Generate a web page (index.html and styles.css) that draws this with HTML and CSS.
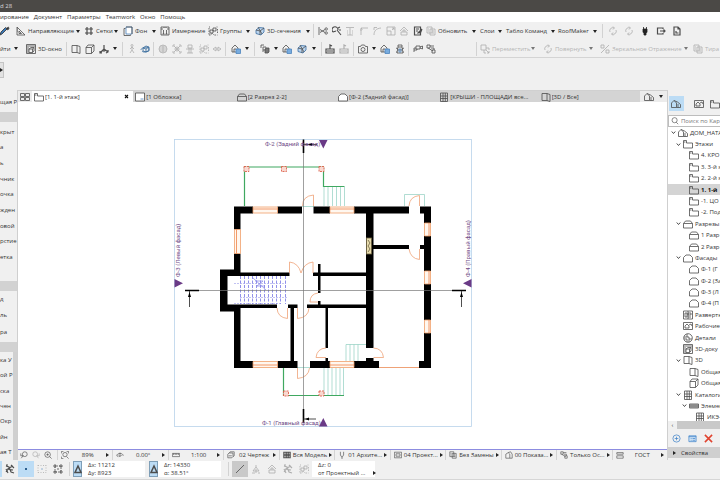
FILE: index.html
```html
<!DOCTYPE html>
<html lang="ru">
<head>
<meta charset="utf-8">
<title>Archicad 28</title>
<link rel="stylesheet" href="styles.css">
</head>
<body>
<svg class="sprite" aria-hidden="true">
  <symbol id="pen" viewBox="0 0 10 10"><path d="M0 9l2-1 5-5-1.500-1.500L1 6z" fill="#3a79b8" stroke="#333"/><path d="M6 2.500L8.500 1 9 3 7 4" fill="#333"/></symbol>
  <symbol id="setsq" viewBox="0 0 10 10"><path d="M1 1v8h8z"/><path d="M3 5v2.500h2.500zM1 3h1M1 5h1"/></symbol>
  <symbol id="hash" viewBox="0 0 10 10"><path d="M3 1v8M7 1v8M1 3h8M1 7h8" stroke-width="1.200"/></symbol>
  <symbol id="bg" viewBox="0 0 10 10"><path d="M3 1h6v7H3z" stroke="#4c84bd" fill="#fff"/><path d="M2.500 2.500H1V9.500h6.500V8.500M3 1h6v7"/></symbol>
  <symbol id="measure" viewBox="0 0 10 10"><path d="M1 1h8M1 1v8h8V1M1 3h2M7 3h2M3.500 4v4M6.500 4v4M4 1v1M6 1v1M2.500 8h2M5.500 8h2"/></symbol>
  <symbol id="group" viewBox="0 0 10 10"><path d="M2 4h3v3H2zM5 2h3v3H5z"/><path d="M1 1h1M8.500 1h1M1 9h2l1-2 2 2h3.500M1 2v7M9.500 3v5" stroke-dasharray="1.500 1"/></symbol>
  <symbol id="sect" viewBox="0 0 10 10"><path d="M1 4l3-2.500L9 2v4L6 9 1 7.500z" fill="#bcd5ee" stroke="#3a6ea5"/><path d="M1 4l4 1v4M5 5l4-3M3 1l4 7"/></symbol>
  <symbol id="split" viewBox="0 0 10 10"><path d="M1 1v8M2 3.500l5 3M2 6.500l5-3"/><circle cx="8.200" cy="3" r="1.200"/><circle cx="8.200" cy="7" r="1.200"/></symbol>
  <symbol id="wand" viewBox="0 0 10 10"><path d="M1 6a3 3 0 1 1 5-2M5 4l4 5M1 6l3-1M6 2l2-1M7 4h2" stroke-width="1.100"/></symbol>
  <symbol id="beam" viewBox="0 0 10 10"><path d="M1 1.500h8M5 2v7M2 9h6M2 5h1M7 5h1M2 7h1M7 7h1"/></symbol>
  <symbol id="corner" viewBox="0 0 10 10"><path d="M2 9V2h7M2 2l1.500 1.500M1 4h2"/></symbol>
  <symbol id="fillet" viewBox="0 0 10 10"><path d="M2 9C2 5 4 2.500 9 2M2 4V1.500h3"/></symbol>
  <symbol id="resize" viewBox="0 0 10 10"><path d="M1 1h8v8H1zM1 5h4v4M6 4l2-2M6 2h2v2"/></symbol>
  <symbol id="roof" viewBox="0 0 10 10"><path d="M1 5l4-4 4 4M2 9V6h6v3zM4 6V4h2v2"/></symbol>
  <symbol id="edit" viewBox="0 0 10 10"><path d="M1.500 1h6v8h-6zM3 3h3M3 5h2M4.500 7.500L9 3M7 8l2-5" stroke-width="1.200"/></symbol>
  <symbol id="copy" viewBox="0 0 10 10"><path d="M1 1h5v6H1zM4 3h5v6H4zM2 3h1M2 5h1M6 5h2M6 7h2"/></symbol>
  <symbol id="refresh" viewBox="0 0 10 10"><path d="M2 6a3 3 0 0 1 4-4M8 4a3 3 0 0 1-4 4M5 .5L6.500 2 5 3.500M5 6.500L3.500 8 5 9.500"/></symbol>
  <symbol id="plug" viewBox="0 0 10 10"><path d="M3 3h4v3L6 7.500V9H4V7.500L3 6zM3.500 1v2M6.500 1v2" fill="#222" stroke="#222"/></symbol>
  <symbol id="export" viewBox="0 0 10 10"><path d="M7 3V2H1.500v6H7V7M4 5h5M7.500 3.500L9 5 7.500 6.500" stroke-width="1.200"/></symbol>
  <symbol id="doc" viewBox="0 0 10 10"><path d="M2 1h4l2 2v6H2zM6 1v2h2M4 5v2h2.500" stroke-width="1.200"/></symbol>
  <symbol id="win3d" viewBox="0 0 10 10"><path d="M.5 .5h9v9h-9z"/><path d="M.5 2h9M3 5l2-1.500h3V7L6.500 8.500H3zM3 5h3.500v3.500M6.500 5L8 3.500M2 3v6"/></symbol>
  <symbol id="box" viewBox="0 0 10 10"><path d="M1 1.500h5v7H1zM6 1.500l3 1v7l-3-1"/></symbol>
  <symbol id="cube" viewBox="0 0 10 10"><path d="M1 3.500h5.500v6H1zM1 3.500L3 1h6L6.500 3.500M9 1v6L6.500 9.500"/></symbol>
  <symbol id="axes" viewBox="0 0 10 10"><path d="M5 5V1M5 5L1 9M5 5l4 3M3.500 6.500L5 7l1.500-.8M1 7v2h2M7 9l2-1V6" stroke-width="1.200"/></symbol>
  <symbol id="walk" viewBox="0 0 10 10"><circle cx="5" cy="1.500" r="1"/><path d="M5 3v3L3 9M5 6l2 3M3 5l2-2 2 2"/></symbol>
  <symbol id="orbit" viewBox="0 0 10 10"><path d="M1 6c0-3 8-4 8-1S3 9 2 7M3 4l3-2 3 1v4L6 8 3 7zM6 5v3M3 4l3 1 3-2" stroke="#34689b"/></symbol>
  <symbol id="globe" viewBox="0 0 10 10"><circle cx="5" cy="5" r="4"/><path d="M1 5h8M5 1v8M2 3h6M2 7h6"/></symbol>
  <symbol id="frame" viewBox="0 0 10 10"><path d="M1 3V1h2M7 1h2v2M9 7v2H7M3 9H1V7M2 2l6 6M8 2L2 8"/><circle cx="5" cy="5" r="2"/></symbol>
  <symbol id="person" viewBox="0 0 10 10"><path d="M3 1h4v3H3zM1 5h8M4 4v5M6 4v5M2 9h6"/></symbol>
  <symbol id="flip" viewBox="0 0 10 10"><path d="M1 5l3-2v4zM9 5L6 3v4zM4 5h2"/></symbol>
  <symbol id="house" viewBox="0 0 10 10"><path d="M1 9V4l3-2 2 2v5zM4 2l3-1 2 3v5H6"/></symbol>
  <symbol id="houseblue" viewBox="0 0 10 10"><path d="M1 8V4l3-3 3 3v4z"/><path d="M5 5h4.500v4.500H5z" fill="#78acdf" stroke="#4c84bd"/><path d="M3 8V5h2"/></symbol>
  <symbol id="darkbox" viewBox="0 0 10 10"><path d="M1 4V1h3M3 3h3v3H3z"/><path d="M5 5l2-1h2v4L8 9H5zM4 7H2" fill="#777"/></symbol>
  <symbol id="base" viewBox="0 0 10 10"><path d="M1 5h8v4H1zM5 5V1l2 1M2 7h6" stroke-width="1.200"/></symbol>
  <symbol id="camera" viewBox="0 0 10 10"><path d="M.5 2.500h2L3.500 1h3l1 1.500h2V9h-9z"/><circle cx="5" cy="5.500" r="2"/></symbol>
  <symbol id="bug" viewBox="0 0 10 10"><path d="M3 3h4l1 6H2zM3 3V1h4v2M1 4l2 1M9 4L7 5M1 8h1M8 8h1M3 6h4"/><path d="M4 5h2v3H4z" stroke="#4c84bd"/></symbol>
  <symbol id="cam2" viewBox="0 0 10 10"><path d="M3 2h4v3H3zM7 3l2.500-1v3L7 4M3 4H1v4M1 6h3V5"/></symbol>
  <symbol id="link" viewBox="0 0 10 10"><path d="M1 1h3v3H1zM6 6h3v3H6zM4 2h4M2 4l5 3M5 4h3v2"/></symbol>
  <symbol id="move" viewBox="0 0 10 10"><path d="M1 1h5v5H1zM4 6v3h2M6 4h3v2M6 6l3 3M9 7v2H7"/></symbol>
  <symbol id="mirror" viewBox="0 0 10 10"><path d="M1 9L9 1M1 1h3v3H1zM6 6h3v3H6z"/></symbol>
  <symbol id="quad" viewBox="0 0 10 10"><path d="M.5 1.500h4v3h-4zM5.500 1.500h4v3h-4zM.5 5.500h4v3h-4zM5.500 5.500h4v3h-4z"/></symbol>
  <symbol id="plan" viewBox="0 0 10 10"><path d="M.5 9V1.500h3v2.500h6V9zM.5 3h2"/></symbol>
  <symbol id="sheet" viewBox="0 0 10 10"><path d="M.5 1h9v8h-9z" fill="#fff"/><path d="M5.500 7h3" stroke="#4c84bd"/></symbol>
  <symbol id="section" viewBox="0 0 10 10"><path d="M.5 4.500L2.500 2h5l2 2.500V9h-9zM.5 4.500h9"/></symbol>
  <symbol id="facade" viewBox="0 0 10 10"><path d="M.5 9V4.500L3 2h4l2.500 2.500V9z" fill="#fff"/></symbol>
  <symbol id="table" viewBox="0 0 10 10"><path d="M1.500 1h7v8.500h-7zM1.500 4h7M1.500 6.500h7M4 1v8.500M6.300 1v8.500"/></symbol>
  <symbol id="homes" viewBox="0 0 10 10"><path d="M.5 8.500V4L3 1.500 5.500 4v4.500zM3 1.500L6.500 3 9.500 5.500v3h-4M7 5v3.500"/></symbol>
  <symbol id="layout" viewBox="0 0 10 10"><path d="M.5 1h9v8h-9zM2 3h2v4H2zM5 3h3v2H5zM5 7h3M5 1v8"/></symbol>
  <symbol id="work" viewBox="0 0 10 10"><path d="M.5 1.500h9v7h-9zM2 7V5l2-2 2 2v2zM6 4l2-1 1 2"/></symbol>
  <symbol id="detail" viewBox="0 0 10 10"><circle cx="5" cy="5" r="4.300"/><path d="M1 4h5v2h3M1 6h3v3M4 1v3M6 6v3"/></symbol>
  <symbol id="elem" viewBox="0 0 10 10"><path d="M.5 3h9v4h-9zM2 3v4M4 3v4M6 3v4M8 3v4M.5 5h9"/></symbol>
  <symbol id="search" viewBox="0 0 10 10"><circle cx="4.500" cy="4" r="3.200"/><path d="M6.500 6.500L9 9"/></symbol>
  <symbol id="undo" viewBox="0 0 10 10"><circle cx="6" cy="4" r="3"/><path d="M4 6L1.500 9M1 3v3h3"/></symbol>
  <symbol id="redo" viewBox="0 0 10 10"><circle cx="4" cy="4" r="3"/><path d="M6 6l2 3M9 3v3H6"/></symbol>
  <symbol id="zoomin" viewBox="0 0 10 10"><circle cx="4.500" cy="4.500" r="3.500"/><path d="M7 7l2.500 2.500M3 4.500h3M4.500 3v3"/></symbol>
  <symbol id="fit" viewBox="0 0 10 10"><path d="M.5 3V.5H3M7 .5h2.500V3M.5 7v2.500H3"/><circle cx="5" cy="4.500" r="2.700"/><path d="M7 7l2.500 2.500"/></symbol>
  <symbol id="rot" viewBox="0 0 10 10"><path d="M1 6c0-4 8-4 8 0M3 5l2 2 2-2M5 7V2M1 6l2 1"/></symbol>
  <symbol id="ruler" viewBox="0 0 10 10"><path d="M.5 3h9v4h-9zM2 3v2M4 3v2M6 3v2M8 3v2"/></symbol>
  <symbol id="layers" viewBox="0 0 10 10"><path d="M1 4l1.500-1.500h5V7L6 8.500H1zM3 2.500L4 1h5v5L7.500 7M2 6h4"/></symbol>
  <symbol id="model" viewBox="0 0 10 10"><path d="M1 1.500h8v7H1zM1 4h8M1 6h8M4 1.500v7M6.500 1.500v7" stroke-width="1.300"/></symbol>
  <symbol id="penset" viewBox="0 0 10 10"><path d="M3 1v4l2 3 2-3V1M5 8v2"/></symbol>
  <symbol id="screen" viewBox="0 0 10 10"><path d="M.5 1.500h9v7h-9zM2.500 3.500h5v3h-5z"/></symbol>
  <symbol id="fillrule" viewBox="0 0 10 10"><path d="M1 2h8M1 2v2h8V2M1 6h8v3H1z"/></symbol>
  <symbol id="tri" viewBox="0 0 10 10"><path d="M2 7h6L5 3z"/><path d="M5 3V1M1 9h3M7 9h2M5 5v4" /></symbol>
  <symbol id="snap" viewBox="0 0 10 10"><path d="M1 2l3 1 2 5 3 1M1 8l3-4 4-2M2 5l6 1M6 1l3 3M1 1h2M1 5l2 4" stroke-width="1.100"/></symbol>
  <symbol id="dots" viewBox="0 0 10 10"><path d="M1 1.500h8M1 8.500h8M1 1v8M9 1v8" stroke-dasharray="1 1.500"/><path d="M4 5h2M5 4v2" stroke="#3a79b8"/></symbol>
  <symbol id="dots2" viewBox="0 0 10 10"><path d="M2 2h6v6H2z" stroke-dasharray="1 1"/><path d="M1 1h2v2H1zM7 1h2v2H7zM1 7h2v2H1zM7 7h2v2H7zM4 5h2"/></symbol>
  <symbol id="slope" viewBox="0 0 10 10"><path d="M1 9L9 1"/></symbol>
  <symbol id="delta" viewBox="0 0 10 10"><path d="M2 8.500h6L5 2z" stroke-width="1.500"/></symbol>
  <symbol id="plus" viewBox="0 0 10 10"><circle cx="5" cy="5" r="4" stroke="#3d82c8"/><path d="M3 5h4M5 3v4" stroke="#3d82c8"/></symbol>
  <symbol id="props" viewBox="0 0 10 10"><path d="M1 2h8v6.500H1z" stroke="#3d82c8" fill="#d5e7f7"/><path d="M1 3h8M3 5h1M5 5h3M3 7h1M5 7h3" stroke="#3d82c8"/></symbol>
  <symbol id="del" viewBox="0 0 10 10"><path d="M1 1l8 8M9 1L1 9" stroke="#e0432f" stroke-width="1.700"/></symbol>
  <symbol id="down" viewBox="0 0 10 10"><path d="M1.500 3L5 7l3.500-4" stroke-width="2"/></symbol>
  <symbol id="x" viewBox="0 0 10 10"><path d="M2 2l6 6M8 2L2 8" stroke-width="2.200" stroke="#111"/></symbol>
</svg>

<header class="titlebar">d 28</header>
<nav class="menubar">
  <a href="#">ирование</a><a href="#">Документ</a><a href="#">Параметры</a><a href="#">Teamwork</a><a href="#">Окно</a><a href="#">Помощь</a>
</nav>

<div class="toolbar toolbar-a">
  <button aria-label="Перо"><svg><use href="#pen"/></svg></button>
  <button><svg><use href="#setsq"/></svg>Направляющие</button><i class="caret"></i>
  <button><svg><use href="#hash"/></svg>Сетки</button><i class="caret"></i>
  <button><svg><use href="#bg"/></svg>Фон</button><i class="caret"></i>
  <button><svg><use href="#measure"/></svg>Измерение</button>
  <button><svg><use href="#group"/></svg>Группы</button><i class="caret"></i>
  <button><svg><use href="#sect"/></svg>3D-сечения</button><i class="caret"></i>
  <i class="sep"></i>
  <button aria-label="Разрезать"><svg><use href="#split"/></svg></button>
  <button aria-label="Подобрать"><svg><use href="#wand"/></svg></button>
  <button disabled aria-label="Подрезать"><svg><use href="#beam"/></svg></button>
  <button disabled aria-label="Угол"><svg><use href="#corner"/></svg></button>
  <button disabled aria-label="Скругление"><svg><use href="#fillet"/></svg></button>
  <button disabled aria-label="Размер"><svg><use href="#resize"/></svg></button>
  <button disabled aria-label="Крыша"><svg><use href="#roof"/></svg></button>
  <button aria-label="Правка"><svg><use href="#edit"/></svg></button>
  <button><svg class="faint"><use href="#copy"/></svg>Обновить</button><i class="caret"></i>
  <button>Слои</button><i class="caret"></i>
  <button>Табло Команд</button><i class="caret"></i>
  <button>RoofMaker</button><i class="caret"></i>
  <i class="sep"></i>
  <button disabled aria-label="Синхронизация"><svg><use href="#refresh"/></svg></button>
  <button disabled aria-label="Обновить связь"><svg><use href="#refresh"/></svg></button>
  <button aria-label="Подключение"><svg><use href="#plug"/></svg></button>
  <button aria-label="Экспорт"><svg><use href="#export"/></svg></button>
  <button aria-label="Отчет"><svg><use href="#doc"/></svg></button>
</div>

<div class="toolbar toolbar-b">
  <button>йти</button><i class="caret"></i>
  <button><svg><use href="#win3d"/></svg>3D-окно</button>
  <i class="sep"></i>
  <button aria-label="Перспектива"><svg><use href="#box"/></svg></button>
  <button aria-label="Аксонометрия"><svg><use href="#cube"/></svg></button>
  <button aria-label="Оси"><svg><use href="#axes"/></svg></button><i class="caret"></i>
  <i class="sep"></i>
  <button disabled aria-label="Прогулка"><svg><use href="#walk"/></svg></button>
  <button aria-label="Орбита"><svg><use href="#orbit"/></svg></button>
  <i class="sep"></i>
  <button disabled aria-label="Вид"><svg><use href="#globe"/></svg></button>
  <button disabled aria-label="Рамка"><svg><use href="#frame"/></svg></button>
  <button disabled aria-label="Точка"><svg><use href="#person"/></svg></button>
  <button disabled aria-label="Группа"><svg><use href="#group"/></svg></button>
  <button disabled aria-label="Отразить"><svg><use href="#flip"/></svg></button>
  <i class="sep"></i>
  <button aria-label="Фильтр"><svg><use href="#houseblue"/></svg></button><i class="caret"></i>
  <i class="sep"></i>
  <button aria-label="Бегущая рамка"><svg><use href="#darkbox"/></svg></button><i class="caret"></i>
  <button aria-label="Дом"><svg><use href="#houseblue"/></svg></button>
  <button aria-label="Сечение"><svg><use href="#sect"/></svg></button><i class="caret"></i>
  <i class="sep"></i>
  <button aria-label="Основание"><svg><use href="#base"/></svg></button>
  <button disabled aria-label="Основания"><svg><use href="#base"/></svg></button>
  <i class="sep"></i>
  <button aria-label="Камера"><svg><use href="#camera"/></svg></button><i class="caret"></i>
  <button aria-label="Снимок"><svg><use href="#houseblue"/></svg></button>
  <button aria-label="Проверка"><svg><use href="#bug"/></svg></button>
  <i class="sep"></i>
  <button aria-label="Съемка"><svg><use href="#cam2"/></svg></button>
  <button aria-label="Связь"><svg><use href="#link"/></svg></button>
  <i class="sep"></i>
  <button disabled><svg><use href="#move"/></svg>Переместить</button><i class="caret soft"></i>
  <button disabled><svg><use href="#refresh"/></svg>Повернуть</button><i class="caret soft"></i>
  <button disabled><svg><use href="#mirror"/></svg>Зеркальное Отражение</button><i class="caret soft"></i>
  <button disabled><svg><use href="#copy"/></svg>Тира</button>
</div>

<div class="infobar"><button aria-label="Развернуть"><i class="play"></i></button></div>

<main class="work">
  <aside class="toolbox">
    <p>щая Р.</p>
    <hr>
    <ul class="design"><li>крыт</li><li>а</li><li>ь</li><li>чник</li><li>очка</li><li>жден</li><li>овой</li><li>рстие</li><li>етка</li></ul>
    <hr>
    <ul class="objects"><li>д</li><li>ль</li><li>ра</li></ul>
    <hr>
    <ul class="docs"><li>ка У</li><li>ой Р</li><li>ска</li><li>чен</li><li>Окр</li><li>йн</li><li>ая Т</li></ul>
  </aside>

  <section class="center">
    <div class="tabs">
      <button class="overview" aria-label="Обзор вкладок"><svg><use href="#quad"/></svg></button>
      <button class="tab active"><svg><use href="#plan"/></svg><span>[1. 1-й этаж]</span><svg class="close"><use href="#x"/></svg></button>
      <button class="tab"><svg><use href="#sheet"/></svg><span>[1 Обложка]</span></button>
      <button class="tab"><svg><use href="#section"/></svg><span>[2 Разрез 2-2]</span></button>
      <button class="tab"><svg><use href="#facade"/></svg><span>[Ф-2 (Задний фасад)]</span></button>
      <button class="tab"><svg><use href="#table"/></svg><span>[КРЫШИ - ПЛОЩАДИ все...</span></button>
      <button class="tab"><svg><use href="#box"/></svg><span>[3D / Все]</span></button>
      <button class="more" aria-label="Показать"><svg><use href="#homes"/></svg><i class="caret"></i></button>
    </div>

    <svg class="plan" viewBox="18 102 649 347" role="img" aria-label="План первого этажа">
      <rect x="174.500" y="139.500" width="297" height="287" fill="none" stroke="#b9d3ea"/>
      <g fill="none" stroke="#8fcfc0" stroke-width=".7">
        <path d="M324 187v19M328 187v19M332.500 187v19M336.500 187v19M340.500 187v19M344.500 187v19"/>
        <path d="M324 368v27M328 368v27M332 368v27M336 368v27M340 368v27M343.500 368v27"/>
        <path d="M366 344.500h-20V361M350 344.500V361M354 344.500V361M358 344.500V361"/>
        <path d="M404.500 206v-11.500h20V206M302 206.500h12M297 367.500h14"/>
      </g>
      <g fill="none" stroke="#3fa860" stroke-width="1.200">
        <path d="M244.500 206v-39h79v19.500h21"/>
        <path d="M283.500 368v27.500H344"/>
      </g>
      <g fill="#f9d8d0" stroke="#d9503a" stroke-dasharray="2 1">
        <path d="M244 166.500h5v5h-5zM281.500 166.500h5v5h-5zM319 166.500h5v5h-5zM283.500 391h5v5h-5zM319 391h5v5h-5z"/>
      </g>
      <g fill="none" stroke="#8585e6" stroke-width=".9">
        <path d="M240.500 276v28M244.500 276v28M248.500 276v28M252.500 276v28M256.500 276v28M260.500 276v28M264.500 276v28M268.500 276v28M272.500 276v28M276.500 276v28M280.500 276v28M285.500 276v28" stroke-dasharray="3 1.500"/>
        <path d="M234 283.500h52M240 297.500h47M234 303.500h46" stroke-width=".5" stroke-dasharray="2 1"/>
        <path d="M252 277l14 13M255 281h8l-6 5h8" stroke-width=".7"/>
      </g>
      <g fill="#000">
        <path d="M234 206.500h19v7h-12.500v16H234zM277.500 206.500H302v7h-24.500zM313.500 206.500H330v7h-16.500zM354 206.500h55v7h-35.500V245H409v4h-35.500v99H366v-40h-38v40h-2.500v-40H307v-3.500h11V301h2.500v3.500H366V276h-45.500v17H318v-17h-5v-3.500h5V264h2.500v8.500H366v-59h-12z"/>
        <path d="M420 206.500h11V223h-7v-9.500h-4zM420 245h4v-9h7v35h-7v-22h-4zM424 284h7v36h-7zM424 333h7v35h-12v-7h5z"/>
        <path d="M234 253.500h6.500v19h49v3.500h-62v28.500H277v3.500h-36.500v53H253v7h-19v-56.500h-14v-42h14z"/>
        <path d="M288 304.500h9.500v3.500H294v53h3.500v7h-20v-7h13v-53H288zM310 361h15.500v-3h2.500v3h2v7h-20zM354 361h12v-3h7.500v3h5.500v7h-25z" transform="translate(0 0)"/>
      </g>
      <g fill="#fff7ef" stroke="#f0a06a" stroke-width=".8">
        <path d="M253 207h24.500v6H253zM330 207h24v6h-24zM253 361.500h24.500v6H253zM330 361.500h24v6h-24zM234.500 229.500h6v24h-6zM424.500 223h6v13h-6zM424.500 271h6v13h-6zM424.500 320h6v13h-6z"/>
        <path d="M253 209h24.500M330 209h24M253 365h24.500M330 365h24M236.500 229.500v24M429 223v13M429 271v13M429 320v13" stroke="#ef8246"/>
      </g>
      <g fill="none" stroke="#efa277" stroke-width=".8">
        <path d="M313.500 206v-11q-11 1-11 11M289.500 273v-11q9 1 11.500 11 3-10 12-11v11M419.500 206v-10.500q-10 1-10.500 10.500M419.500 249v10.500q-9-1-10.500-10.500M287.500 308v10.500q-10-1-10.500-10.500M297.500 308v10.500q11-1 11.500-10.500M318 302h-8q0-8 8-9M326 357.500h-10q1-9 10-9.500M373.500 357.500h10q-1-9-10-9.500M297.500 368v10.500q11-1 12-10.500"/>
        <path d="M379 367.500h40" stroke-width="1"/>
      </g>
      <rect x="366.500" y="238" width="5" height="16" fill="#e8dcae" stroke="#6b6140"/>
      <path d="M368 240l2 3-2 3 2 3-2 3" fill="none" stroke="#6b6140"/>
      <path d="M303.500 140v280M190 290.500h270" stroke="#777" stroke-width=".7"/>
      <path d="M303.500 139.500v13.500M303.500 409v14M185 290.500h14M452 290.500h14" stroke="#000" stroke-width="1.600"/>
      <path d="M303 144.500h14M303 419h13M189.500 291v16M461.500 291v16" stroke="#222" stroke-width=".8"/>
      <path d="M308 144.500l4-1.500v3zM305 419l4-1.500v3zM188 297l1.500-5 1.500 5zM460 297l1.500-5 1.500 5z"/>
      <path d="M319 140h8.500l-4.200 8.500zM319 426.500h8.500l-4.200-8.500zM174.500 279v8.500l8.500-4.200zM471.500 279v8.500l-8.500-4.200z" fill="#6a3a86"/>
      <g class="marks">
        <text x="265" y="146">Ф-2 (Задний фасад)</text>
        <text x="262" y="425">Ф-1 (Главный фасад)</text>
        <text transform="translate(180 277) rotate(-90)">Ф-3 (Левый фасад)</text>
        <text transform="translate(470 277) rotate(-90)">Ф-4 (Правый фасад)</text>
      </g>
    </svg>

    <div class="status">
      <div class="zoom"><svg><use href="#undo"/></svg><svg class="faint"><use href="#redo"/></svg><svg><use href="#zoomin"/></svg></div>
      <button><svg><use href="#fit"/></svg><span>89%</span><i class="play"></i></button>
      <button><svg><use href="#rot"/></svg><span>0.00°</span><i class="play"></i></button>
      <button><svg><use href="#ruler"/></svg><span>1:100</span><i class="play"></i></button>
      <button><svg><use href="#layers"/></svg><span>02 Чертеж</span><i class="play"></i></button>
      <button><svg><use href="#model"/></svg><span>Вся Модель</span><i class="play"></i></button>
      <button><svg><use href="#penset"/></svg><span>01 Архите...</span><i class="play"></i></button>
      <button><svg><use href="#screen"/></svg><span>04 Проект...</span><i class="play"></i></button>
      <button><svg><use href="#copy"/></svg><span>Без Замены</span><i class="play"></i></button>
      <button><svg><use href="#house"/></svg><span>00 Показа...</span><i class="play"></i></button>
      <button><svg><use href="#link"/></svg><span>Только Ос...</span><i class="play"></i></button>
      <button><svg><use href="#fillrule"/></svg><span>ГОСТ</span><i class="play"></i></button>
    </div>
  </section>

  <aside class="navigator">
    <div class="modes">
      <button class="on" aria-label="Карта проекта"><svg><use href="#homes"/></svg></button>
      <i class="sep"></i>
      <button aria-label="Карта видов"><svg><use href="#work"/></svg></button>
      <button aria-label="Книга макетов"><svg><use href="#plan"/></svg></button>
    </div>
    <label class="search"><svg><use href="#search"/></svg><input type="text" placeholder="Поиск по Кар" aria-label="Поиск по Карте"></label>
    <ul class="tree">
      <li class="l0"><svg class="tw"><use href="#down"/></svg><svg><use href="#homes"/></svg>ДОМ_НАТА</li>
      <li class="l1"><svg class="tw"><use href="#down"/></svg><svg><use href="#plan"/></svg>Этажи</li>
      <li class="l2"><svg><use href="#plan"/></svg>4. КРО</li>
      <li class="l2"><svg><use href="#plan"/></svg>3. 3-й э</li>
      <li class="l2"><svg><use href="#plan"/></svg>2. 2-й э</li>
      <li class="l2 current"><svg><use href="#plan"/></svg>1. 1-й</li>
      <li class="l2"><svg><use href="#plan"/></svg>-1. ЦО</li>
      <li class="l2"><svg><use href="#plan"/></svg>-2. Под</li>
      <li class="l1"><svg class="tw"><use href="#down"/></svg><svg><use href="#section"/></svg>Разрезы</li>
      <li class="l2"><svg><use href="#section"/></svg>1 Разр</li>
      <li class="l2"><svg><use href="#section"/></svg>2 Разр</li>
      <li class="l1"><svg class="tw"><use href="#down"/></svg><svg><use href="#facade"/></svg>Фасады</li>
      <li class="l2"><svg><use href="#facade"/></svg>Ф-1 (Г</li>
      <li class="l2"><svg><use href="#facade"/></svg>Ф-2 (За</li>
      <li class="l2"><svg><use href="#facade"/></svg>Ф-3 (Л</li>
      <li class="l2"><svg><use href="#facade"/></svg>Ф-4 (П</li>
      <li class="l1 leaf"><svg><use href="#layout"/></svg>Развертк</li>
      <li class="l1 leaf"><svg><use href="#work"/></svg>Рабочие</li>
      <li class="l1 leaf"><svg><use href="#detail"/></svg>Детали</li>
      <li class="l1 leaf"><svg><use href="#win3d"/></svg>3D-доку</li>
      <li class="l1"><svg class="tw"><use href="#down"/></svg><svg><use href="#box"/></svg>3D</li>
      <li class="l2"><svg><use href="#box"/></svg>Общая</li>
      <li class="l2"><svg><use href="#cube"/></svg>Общая</li>
      <li class="l1"><svg class="tw"><use href="#down"/></svg><svg><use href="#table"/></svg>Каталоги</li>
      <li class="l2 open"><svg class="tw"><use href="#down"/></svg><svg><use href="#elem"/></svg>Элемен</li>
      <li class="l3"><svg><use href="#table"/></svg>ИКЭ-</li>
    </ul>
    <div class="hscroll"><span>‹</span><i></i></div>
    <div class="actions">
      <button aria-label="Создать"><svg><use href="#plus"/></svg></button>
      <button aria-label="Параметры"><svg><use href="#props"/></svg></button>
      <button aria-label="Удалить"><svg><use href="#del"/></svg></button>
    </div>
    <button class="properties"><i class="play"></i>Свойства</button>
  </aside>
</main>

<footer class="coords">
  <button class="on edge" aria-label="Режим"></button>
  <button aria-label="Привязка"><svg><use href="#snap"/></svg></button>
  <button class="on" aria-label="Точка"><b></b></button>
  <button aria-label="Сетка"><svg class="faint"><use href="#dots"/></svg></button>
  <button aria-label="Сетка конструкции"><svg><use href="#dots2"/></svg></button>
  <i class="sep"></i>
  <button class="on delta" aria-label="Относительные координаты"><svg><use href="#delta"/></svg></button>
  <div class="field"><span>Δx: 11212</span><span>Δy: 8923</span></div>
  <button class="on delta" aria-label="Полярные координаты"><svg><use href="#delta"/></svg></button>
  <div class="field"><span>Δr: 14330</span><span>α: 38.51°</span></div>
  <i class="sep"></i>
  <button class="pressed" aria-label="Линия"><svg><use href="#slope"/></svg></button>
  <button disabled aria-label="Способ 1"><svg><use href="#tri"/></svg></button>
  <button disabled aria-label="Способ 2"><svg><use href="#roof"/></svg></button>
  <button disabled aria-label="Способ 3"><svg><use href="#snap"/></svg></button>
  <button disabled aria-label="Способ 4"><svg><use href="#group"/></svg></button>
  <div class="field"><span>Δz: 0</span><span>от Проектный ...<i class="play"></i></span></div>
</footer>
</body>
</html>
```
FILE: styles.css
```css
* { box-sizing: border-box; }

body {
  margin: 0;
  height: 100vh;
  display: flex;
  flex-direction: column;
  overflow: hidden;
  background: #f0f0f0;
  color: #333;
  font: 6px/10px "Open Sans", "Noto Sans", sans-serif;
}

ul, p { margin: 0; padding: 0; list-style: none; }

button, input {
  margin: 0;
  padding: 0;
  border: 0;
  background: none;
  color: inherit;
  font: inherit;
}

button {
  display: flex;
  align-items: center;
  gap: 2px;
  white-space: nowrap;
}

svg {
  flex: none;
  width: 10px;
  height: 10px;
  fill: none;
  stroke: #4c4c4c;
  stroke-width: .8;
}

.sprite { position: absolute; width: 0; height: 0; }
.faint { opacity: .4; }
button:disabled { color: #b4b4b4; }
button:disabled svg { opacity: .4; }

.caret {
  justify-self: start;
  border: 2px solid transparent;
  border-top: 3px solid #222;
  border-bottom: 0;
}
.caret.soft { border-top-color: #777; }

.play {
  flex: none;
  border: 2px solid transparent;
  border-left: 3px solid #222;
  border-right: 0;
}

.sep { width: 1px; height: 14px; background: #d2d2d2; }

.titlebar {
  height: 12px;
  background: #4b4946;
  color: #d8d8d8;
  line-height: 13px;
}

.menubar {
  display: flex;
  gap: 5px;
  height: 10px;
  background: #fff;
  line-height: 11px;
}
.menubar a { color: #333; text-decoration: none; }

.toolbar { display: grid; align-items: center; height: 18px; }
.toolbar-a {
  grid-template-columns:
    16px 60px 8px 30px 9px 29px 8px 48px 38px 9px 51px 7px 5px
    repeat(4, 14px 13px)
    46px 8px 18px 8px 45px 7px 35px 9px 6px repeat(5, 16px);
}
.toolbar-b {
  border-bottom: 1px solid #d4d4d4;
  grid-template-columns:
    14px 12px 40px 5px 14px 14px 14px 9px 5px 13px 13px 5px
    14px 13px 14px 13px 13px 6px 14px 9px 6px 14px 8px 15px 15px 9px 4px
    14px 14px 5px 14px 8px 15px 13px 5px 13px 50px 4px
    51px 12px 46px 11px 84px 9px 27px;
}

.infobar { height: 32px; padding-top: 4px; }
.infobar button {
  width: 4px;
  height: 16px;
  background: #e2e2e2;
  border: 1px solid #c4c4c4;
  border-left: 0;
}

.work {
  flex: 1;
  min-height: 0;
  display: grid;
  grid-template-columns: 18px minmax(0, 1fr) 53px;
}

/* Toolbox */
.toolbox {
  display: flex;
  flex-direction: column;
  min-height: 0;
  overflow: hidden;
  border-right: 1px solid #cfcfcf;
  white-space: nowrap;
}
.toolbox p { height: 22px; padding-top: 7px; }
.toolbox hr { flex: none; width: 100%; height: 10px; margin: 0; border: 0; background: #d2d2d2; }
.toolbox ul { display: grid; grid-auto-rows: minmax(0, 1fr); align-items: center; min-height: 0; }
.design { flex: 141; padding: 2px 0 16px; }
.objects { flex: 49; padding-bottom: 2px; }
.docs { flex: 108; border-right: 4px solid #d0d0d0; }

/* Centre column */
.center { display: flex; flex-direction: column; min-width: 0; min-height: 0; background: #fff; }

.tabs { display: flex; height: 12px; border-top: 1px solid #d0d0d0; background: #d4d4d4; }
.overview { width: 14px; justify-content: center; background: #ececec; }
.tab { flex: 1; min-width: 0; gap: 1px; padding: 0 4px 0 2px; }
.tab span { flex: 1; overflow: hidden; text-align: left; }
.tab.active { background: #fff; }
.tab .close { width: 5px; height: 5px; }
.more { width: 27px; justify-content: center; gap: 5px; background: #ececec; }

.plan { flex: 1; width: 100%; min-height: 0; stroke: none; fill: #000; }
.marks text { fill: #6f4b86; font: 6px Roboto, "Liberation Sans", sans-serif; }

.status {
  display: grid;
  grid-template-columns: 39px repeat(11, minmax(0, 1fr));
  height: 11px;
  border-top: 1px solid #8c8ce0;
  background: #f0f0f0;
}
.status .zoom { display: flex; align-items: center; gap: 4px; padding-left: 2px; }
.status svg { width: 8px; height: 8px; }
.status button { border-left: 1px solid #d4d4d4; padding: 0 3px; }
.status span { flex: 1; text-align: center; }

/* Navigator */
.navigator {
  display: flex;
  flex-direction: column;
  min-height: 0;
  overflow: hidden;
  border-left: 1px solid #cfcfcf;
}
.modes { display: flex; align-items: center; gap: 5px; height: 25px; padding: 2px 0 0 1px; flex: none; }
.modes button { width: 11px; height: 15px; flex: none; }
.modes .on { width: 15px; padding: 0 2px; background: #bcdcf5; }
.search {
  display: flex;
  align-items: center;
  gap: 2px;
  flex: none;
  height: 12px;
  padding-left: 2px;
  background: #fff;
  border: 1px solid #bdbdbd;
  border-right: 0;
}
.search svg { width: 8px; height: 8px; }
.search input { flex: 1; min-width: 0; outline: 0; }
.search input::placeholder { color: #777; }

.tree {
  flex: 1;
  min-height: 0;
  display: grid;
  grid-auto-rows: minmax(0, 1fr);
  background: #fff;
}
.tree li { display: flex; align-items: center; gap: 2px; white-space: nowrap; }
.tree .tw { width: 5px; height: 5px; }
.l0 { padding-left: 3px; }
.l1 { padding-left: 8px; }
.l1.leaf { padding-left: 15px; }
.l2 { padding-left: 21px; }
.l2.open { padding-left: 14px; }
.l3 { padding-left: 27px; }
.current { background: #d4d4d4; color: #111; font-weight: 700; }

.hscroll { position: relative; flex: none; display: flex; align-items: center; height: 8px; margin-top: -2px; background: #f0f0f0; }
.hscroll span { width: 9px; text-align: center; }
.hscroll i { flex: 1; height: 8px; background: #c9c9c9; }
.actions { display: flex; align-items: center; flex: none; gap: 7px; height: 18px; padding-left: 4px; }
.actions svg { width: 9px; height: 9px; }
.properties { flex: none; height: 11px; margin-bottom: 2px; padding-left: 5px; gap: 5px; background: #cfcfcf; }

/* Coordinates */
.coords {
  display: flex;
  align-items: center;
  height: 20px;
  padding-bottom: 2px;
  border-bottom: 1px solid #d6d6d6;
  line-height: 8px;
}
.coords button { width: 16px; height: 16px; justify-content: center; flex: none; }
.coords .on { background: #bcdcf5; }
.coords .edge { width: 2px; }
.coords b { width: 2px; height: 2px; background: #2d5f8e; }
.coords .sep { margin: 0 3px; }
.coords .delta { width: 9px; border: 1px solid #7f9fb8; }
.coords .pressed { background: #c9c9c9; }
.field { display: flex; flex-direction: column; width: 67px; padding-left: 6px; background: linear-gradient(to right, #fff 63px, #f0f0f0 63px); }
.field span { display: flex; align-items: center; justify-content: space-between; padding-right: 3px; white-space: nowrap; }
```
